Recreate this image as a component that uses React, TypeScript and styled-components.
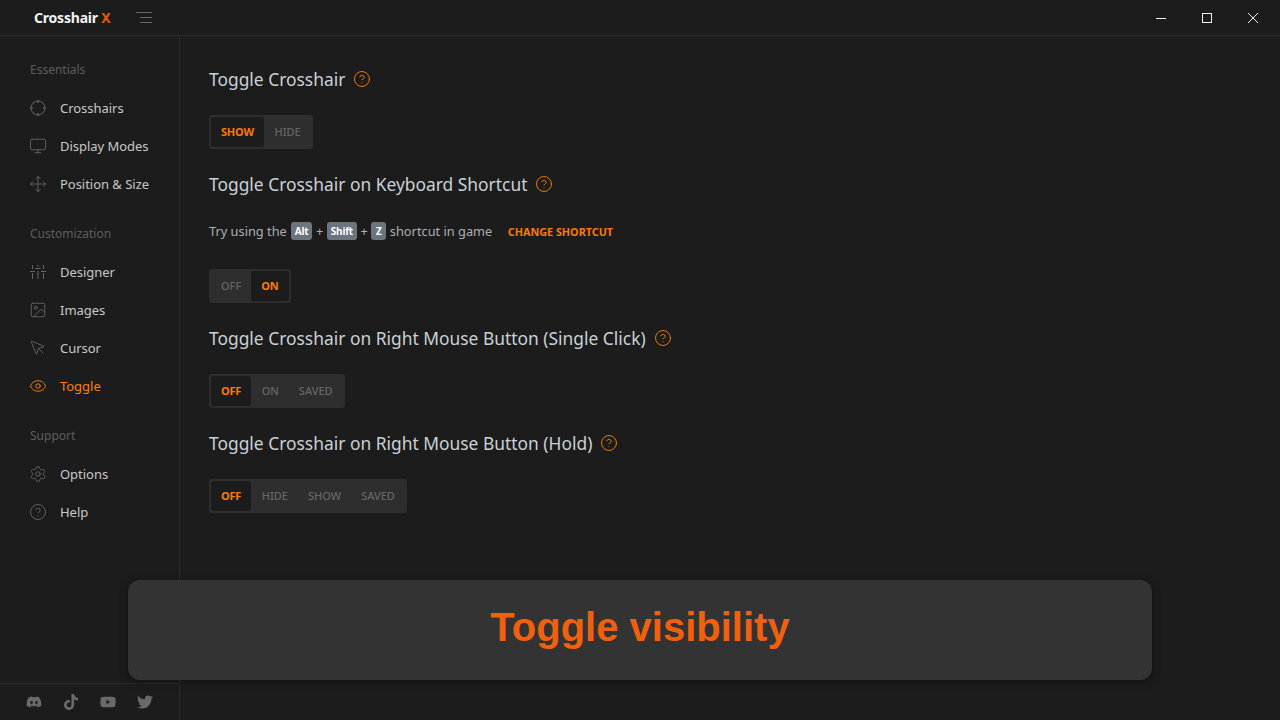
import React from 'react';
import styled, { createGlobalStyle } from 'styled-components';
import { CircleHelp, Eye, Image, Monitor, MousePointer, Move, Settings } from 'lucide-react';
import { FaDiscord, FaTiktok, FaTwitter, FaYoutube } from 'react-icons/fa';

const GlobalStyle = createGlobalStyle`
  html, body {
    margin: 0;
    padding: 0;
    background: #1c1c1c;
    font-family: 'Noto Sans', 'Open Sans', sans-serif;
    overflow: hidden;
  }
  * { box-sizing: border-box; }
`;

const Window = styled.div`
  position: relative;
  width: 1280px;
  height: 720px;
  display: flex;
  flex-direction: column;
  background: #1c1c1c;
  overflow: hidden;
`;

const TitleBar = styled.header`
  height: 36px;
  flex: none;
  display: flex;
  align-items: center;
  padding: 0 4px 0 34px;
  border-bottom: 1px solid #2b2b2b;
`;

const Logo = styled.div`
  font-size: 14px;
  font-weight: 700;
  color: #f4f4f4;
  letter-spacing: -0.2px;
  width: 102px;
  span { color: #e8590c; }
`;

const WindowControls = styled.div`
  margin-left: auto;
  display: flex;
`;

const WindowButton = styled.div`
  width: 46px;
  height: 36px;
  display: flex;
  align-items: center;
  justify-content: center;
  color: #f0f0f0;
`;

const Body = styled.div`
  flex: 1;
  display: flex;
  min-height: 0;
`;

const Sidebar = styled.aside`
  width: 180px;
  flex: none;
  display: flex;
  flex-direction: column;
  border-right: 1px solid #2b2b2b;
`;

const Nav = styled.nav`
  flex: 1;
  padding: 24px 0 0 30px;
`;

const NavLabel = styled.div`
  font-size: 12px;
  line-height: 20px;
  color: #5c5c5c;
  margin-bottom: 9px;
`;

const NavGroup = styled.div`
  margin-bottom: 21px;
`;

const NavItem = styled.div<{ $active?: boolean }>`
  height: 38px;
  display: flex;
  align-items: center;
  gap: 14px;
  font-size: 13px;
  letter-spacing: -0.03px;
  color: ${(props) => (props.$active ? '#ff8000' : '#c8c8c8')};
  svg {
    flex: none;
    margin: 0 -1px;
    color: ${(props) => (props.$active ? '#ff8000' : '#666666')};
  }
`;

const Socials = styled.div`
  height: 37px;
  flex: none;
  margin-right: -1px;
  display: flex;
  align-items: center;
  gap: 21px;
  padding-left: 26px;
  border-top: 1px solid #2b2b2b;
  color: #6a6a6a;
`;

const Content = styled.main`
  flex: 1;
  padding: 28px 0 0 29px;
`;

const Heading = styled.h2`
  margin: 0;
  height: 30px;
  padding-bottom: 1px;
  display: flex;
  align-items: center;
  gap: 8px;
  font-size: 17.4px;
  font-weight: 400;
  color: #c9d1d6;
  svg { color: #ff8000; }
`;

const Segmented = styled.div`
  display: inline-flex;
  height: 34px;
  margin: 21px 0 20px;
  padding: 2px;
  background: #2e2e2e;
  border-radius: 3px;
`;

const Segment = styled.div<{ $active?: boolean }>`
  display: flex;
  align-items: center;
  padding: 0 10px 2px;
  font-size: 11px;
  font-weight: ${(props) => (props.$active ? 700 : 500)};
  letter-spacing: ${(props) => (props.$active ? '-0.2px' : '0')};
  margin-right: ${(props) => (props.$active ? '0.5px' : '0')};
  color: ${(props) => (props.$active ? '#ff7a00' : '#666666')};
  background: ${(props) => (props.$active ? '#1c1c1c' : 'transparent')};
  border-radius: 3px;
  &:last-child { margin-right: 0; }
`;

const ShortcutRow = styled.div`
  display: flex;
  align-items: center;
  height: 20px;
  margin: 22px 0 7px;
  font-size: 12.8px;
  color: #a9afb3;
  gap: 3.5px;
`;

const Key = styled.span`
  display: inline-flex;
  align-items: center;
  justify-content: center;
  height: 18px;
  min-width: 15px;
  padding: 0 4px;
  background: #6c757d;
  border-radius: 3px;
  color: #ffffff;
  font-size: 10px;
  font-weight: 700;
  letter-spacing: -0.2px;
  &:first-of-type { margin-left: 0.5px; }
`;

const ChangeLink = styled.span`
  margin-left: 12px;
  font-size: 10.8px;
  font-weight: 700;
  color: #ff7a00;
`;

const Banner = styled.div`
  position: absolute;
  left: 128px;
  top: 580px;
  width: 1024px;
  height: 100px;
  padding-bottom: 5px;
  display: flex;
  align-items: center;
  justify-content: center;
  background: #333333;
  border-radius: 12px;
  box-shadow: 0 2px 8px rgba(0, 0, 0, 0.35);
  font-family: 'Liberation Sans', Arial, sans-serif;
  font-size: 40px;
  font-weight: 700;
  color: #f0600f;
`;

function CrosshairIcon() {
  return (
    <svg width="18" height="18" viewBox="0 0 18 18" fill="none" stroke="currentColor" strokeWidth="1">
      <circle cx="9" cy="9" r="7" />
      <path d="M9 1v3M9 14v3M1 9h3M14 9h3" />
    </svg>
  );
}

function SlidersIcon() {
  return (
    <svg width="18" height="18" viewBox="0 0 18 18" fill="none" stroke="currentColor" strokeWidth="1">
      <path d="M3.5 2v4M3.5 10v6M9 2v2M9 8v8M14.5 2v4M14.5 10v6M1 8.5h5M6.5 5.5h5M12 8.5h5" />
    </svg>
  );
}

function MenuIcon() {
  return (
    <svg width="16" height="11" viewBox="0 0 16 11" fill="none" stroke="#666666" strokeWidth="1">
      <path d="M0 .5h16M4 5.5h12M4 10.5h12" />
    </svg>
  );
}

const groups = [
  {
    label: 'Essentials',
    items: [
      { name: 'Crosshairs', icon: <CrosshairIcon /> },
      { name: 'Display Modes', icon: <Monitor size={18} strokeWidth={1.2} /> },
      { name: 'Position & Size', icon: <Move size={18} strokeWidth={1.2} /> },
    ],
  },
  {
    label: 'Customization',
    items: [
      { name: 'Designer', icon: <SlidersIcon /> },
      { name: 'Images', icon: <Image size={18} strokeWidth={1.2} /> },
      { name: 'Cursor', icon: <MousePointer size={18} strokeWidth={1.2} /> },
      { name: 'Toggle', icon: <Eye size={18} strokeWidth={1.2} />, active: true },
    ],
  },
  {
    label: 'Support',
    items: [
      { name: 'Options', icon: <Settings size={18} strokeWidth={1.2} /> },
      { name: 'Help', icon: <CircleHelp size={18} strokeWidth={1.2} /> },
    ],
  },
];

function Options({ values, active }: { values: string[]; active: string }) {
  return (
    <Segmented>
      {values.map((value) => (
        <Segment key={value} $active={value === active}>
          {value}
        </Segment>
      ))}
    </Segmented>
  );
}

function SectionTitle({ children }: { children: React.ReactNode }) {
  return (
    <Heading>
      {children}
      <CircleHelp size={18} strokeWidth={1.2} />
    </Heading>
  );
}

export default function App() {
  return (
    <Window>
      <GlobalStyle />
      <TitleBar>
        <Logo>
          Crosshair <span>X</span>
        </Logo>
        <MenuIcon />
        <WindowControls>
          <WindowButton>
            <svg width="10" height="10" viewBox="0 0 10 10" stroke="currentColor"><path d="M0 5.5h10" /></svg>
          </WindowButton>
          <WindowButton>
            <svg width="10" height="10" viewBox="0 0 10 10" fill="none" stroke="currentColor"><rect x=".5" y=".5" width="9" height="9" /></svg>
          </WindowButton>
          <WindowButton>
            <svg width="10" height="10" viewBox="0 0 10 10" stroke="currentColor"><path d="M0 0l10 10M10 0L0 10" /></svg>
          </WindowButton>
        </WindowControls>
      </TitleBar>
      <Body>
        <Sidebar>
          <Nav>
            {groups.map((group) => (
              <NavGroup key={group.label}>
                <NavLabel>{group.label}</NavLabel>
                {group.items.map((item) => (
                  <NavItem key={item.name} $active={item.active}>
                    {item.icon}
                    {item.name}
                  </NavItem>
                ))}
              </NavGroup>
            ))}
          </Nav>
          <Socials>
            <FaDiscord size={16} />
            <FaTiktok size={16} />
            <FaYoutube size={16} />
            <FaTwitter size={16} />
          </Socials>
        </Sidebar>
        <Content>
          <SectionTitle>Toggle Crosshair</SectionTitle>
          <Options values={['SHOW', 'HIDE']} active="SHOW" />
          <SectionTitle>Toggle Crosshair on Keyboard Shortcut</SectionTitle>
          <ShortcutRow>
            Try using the <Key>Alt</Key> + <Key>Shift</Key> + <Key>Z</Key> shortcut in game
            <ChangeLink>CHANGE SHORTCUT</ChangeLink>
          </ShortcutRow>
          <Options values={['OFF', 'ON']} active="ON" />
          <SectionTitle>Toggle Crosshair on Right Mouse Button (Single Click)</SectionTitle>
          <Options values={['OFF', 'ON', 'SAVED']} active="OFF" />
          <SectionTitle>Toggle Crosshair on Right Mouse Button (Hold)</SectionTitle>
          <Options values={['OFF', 'HIDE', 'SHOW', 'SAVED']} active="OFF" />
        </Content>
      </Body>
      <Banner>Toggle visibility</Banner>
    </Window>
  );
}
